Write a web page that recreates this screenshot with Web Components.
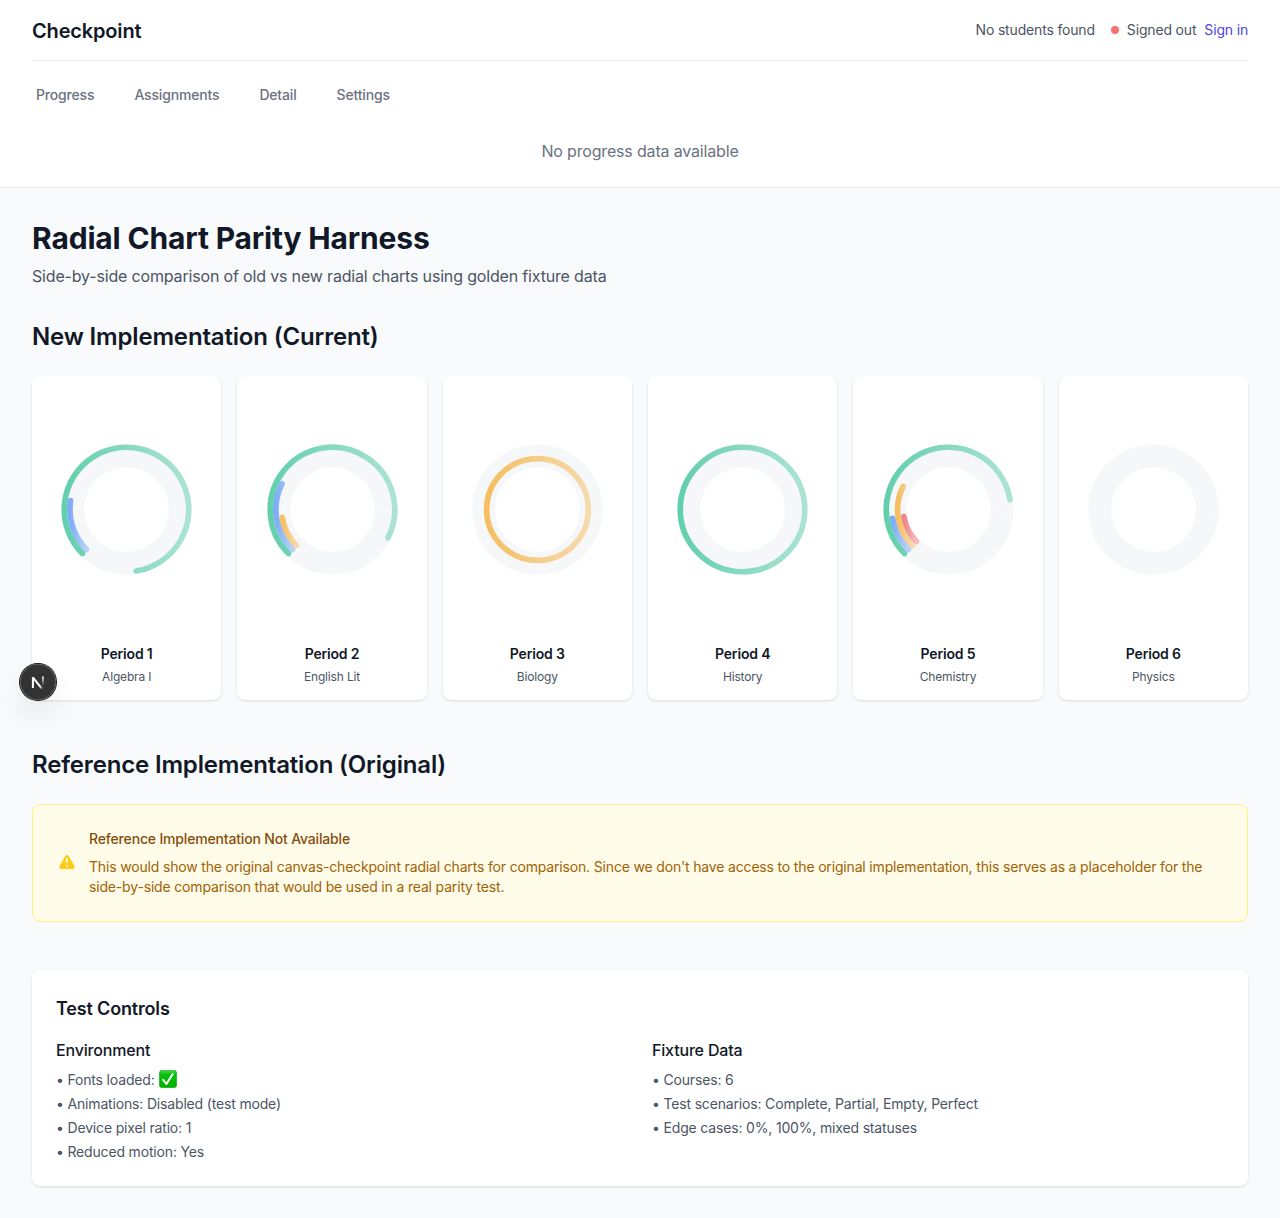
<!DOCTYPE html>
<html lang="en">
<head>
<meta charset="utf-8">
<title>Checkpoint</title>
<style>
  html, body { margin: 0; }
  body { font-family: Inter, "Liberation Sans", sans-serif; font-size: 16px; line-height: 24px; letter-spacing: -0.168px; color: #111827; background: #f9fafb; -webkit-font-smoothing: antialiased; }
</style>
</head>
<body>
<harness-page></harness-page>
<script>
const reset = 'h1,h2,h3,h4,p,ul,li{margin:0;padding:0}:host,div,nav,main{box-sizing:border-box}';
class Base extends HTMLElement {
  connectedCallback() {
    const root = this.attachShadow({ mode: 'open' });
    root.innerHTML = '<style>' + reset + this.css() + '</style>' + this.html();
  }
}

customElements.define('app-header', class extends Base {
  css() { return `
    :host{display:block;background:#fff;border-bottom:1px solid #e5e7eb;padding:0 32px;height:188px}
    .top{display:flex;justify-content:space-between;align-items:center;height:61px;border-bottom:1px solid #e5e7eb}
    h1{font-size:20px;line-height:28px;font-weight:600;padding-top:1px}
    .status{display:flex;align-items:center;font-size:14px;line-height:20px;color:#4b5563}
    .dot{width:8px;height:8px;border-radius:50%;background:#f87171;margin:0 8px 0 16px}
    a{color:#4f46e5;margin-left:8px}
    nav{display:flex;gap:40px;padding:24px 4px 0;font-size:14px;line-height:20px;font-weight:500;color:#6b7280}
    .empty{text-align:center;color:#6b7280;padding-top:34px}
  `; }
  html() { return `
    <div class="top"><h1>Checkpoint</h1>
      <div class="status"><span>No students found</span><i class="dot"></i><span>Signed out</span><a>Sign in</a></div>
    </div>
    <nav><span>Progress</span><span>Assignments</span><span>Detail</span><span>Settings</span></nav>
    <p class="empty">No progress data available</p>`; }
});

let gradientId = 0;
customElements.define('radial-chart', class extends Base {
  css() { return ':host{display:flex;justify-content:center;height:236px;padding-left:.3px}svg{display:block;flex:none;width:157px;height:235px;overflow:visible}'; }
  html() {
    const colors = ['#10b981', '#3b82f6', '#f59e0b', '#ef4444'];
    const radii = [62.25, 56.55, 50.85, 45.15];
    const values = this.getAttribute('values').split(',').map(Number);
    let defs = '', tracks = '', bars = '';
    radii.forEach((r, i) => {
      tracks += `<circle r="${r}" fill="none" stroke="#f5f7f9" stroke-width="5.66"/>`;
      const v = values[i];
      if (!v) return;
      const id = 'g' + gradientId++;
      defs += `<linearGradient id="${id}"><stop stop-color="${colors[i]}" stop-opacity=".64"/><stop offset="1" stop-color="${colors[i]}" stop-opacity=".32"/></linearGradient>`;
      const paint = `fill="none" stroke="url(#${id})" stroke-width="5.7" stroke-linecap="round"`;
      if (v >= 100) { bars += `<circle r="${r}" ${paint}/>`; return; }
      const pt = deg => { const a = deg * Math.PI / 180; return (r * Math.cos(a)).toFixed(3) + ' ' + (-r * Math.sin(a)).toFixed(3); };
      const sweep = v * 3.6;
      bars += `<path d="M${pt(225)}A${r} ${r} 0 ${sweep > 180 ? 1 : 0} 1 ${pt(225 - sweep)}" ${paint}/>`;
    });
    return `<svg viewBox="-78.5 -117.5 157 235"><defs>${defs}</defs>${tracks}${bars}</svg>`;
  }
});

customElements.define('course-card', class extends Base {
  css() { return `
    :host{display:block;background:#fff;border-radius:8px;padding:16px;text-align:center;box-shadow:0 1px 3px rgba(0,0,0,.1),0 1px 2px -1px rgba(0,0,0,.1)}
    h3{font-size:14px;line-height:20px;font-weight:600;margin-top:16px}
    p{font-size:12px;line-height:16px;color:#4b5563;margin:5px 0 -1px}`; }
  html() { return `<radial-chart values="${this.getAttribute('values')}"></radial-chart><h3>${this.getAttribute('period')}</h3><p><slot></slot></p>`; }
});

customElements.define('notice-box', class extends Base {
  css() { return `
    :host{display:flex;align-items:center;gap:12px;background:#fefce8;border:1px solid #fef08a;border-radius:8px;padding:24px}
    svg{width:20px;height:20px;flex:none;color:#facc15}
    .t{font-size:14px;line-height:20px;color:#a16207}
    h3{font-size:14px;line-height:20px;font-weight:500;color:#854d0e;margin-bottom:8px}`; }
  html() { return `<svg viewBox="0 0 20 20" fill="currentColor"><path fill-rule="evenodd" d="M8.257 3.099c.765-1.36 2.722-1.36 3.486 0l5.58 9.92c.75 1.334-.213 2.98-1.742 2.98H4.42c-1.53 0-2.493-1.646-1.743-2.98l5.58-9.92zM11 13a1 1 0 11-2 0 1 1 0 012 0zm-1-8a1 1 0 00-1 1v3a1 1 0 002 0V6a1 1 0 00-1-1z" clip-rule="evenodd"/></svg><div class="t"><h3>${this.getAttribute('heading')}</h3><slot></slot></div>`; }
});

customElements.define('check-mark', class extends Base {
  css() { return ':host{display:inline-block;width:18px;height:18px;vertical-align:-3px;margin:-1px 0 0 1px}svg{display:block}'; }
  html() { return `<svg width="18" height="18" viewBox="0 0 18 18"><defs><linearGradient id="c" x2="0" y2="1"><stop stop-color="#43d84b"/><stop offset=".25" stop-color="#08bd0c"/><stop offset="1" stop-color="#00b400"/></linearGradient></defs><rect x=".3" y=".3" width="17.4" height="17.4" rx="3" fill="url(#c)" stroke="#14a51b" stroke-width=".6"/><path d="M4.2 9.8 7.4 14 13.6 4.2" fill="none" stroke="#fff" stroke-width="2" stroke-linecap="round" stroke-linejoin="round"/></svg>`; }
});

customElements.define('test-controls', class extends Base {
  css() { return `
    :host{display:block;background:#fff;border-radius:8px;padding:24px;box-shadow:0 1px 3px rgba(0,0,0,.1),0 1px 2px -1px rgba(0,0,0,.1)}
    h3{font-size:18px;line-height:28px;font-weight:600;padding-top:1px;margin-bottom:15px}
    .cols{display:grid;grid-template-columns:1fr 1fr;gap:24px}
    h4{font-size:16px;line-height:24px;font-weight:500;margin-bottom:8px}
    ul{list-style:none;display:flex;flex-direction:column;gap:4px;font-size:14px;line-height:20px;color:#4b5563}
    li{height:20px}`; }
  html() { return `<h3>Test Controls</h3><div class="cols">
    <div><h4>Environment</h4><ul><li>• Fonts loaded: <check-mark></check-mark></li><li>• Animations: Disabled (test mode)</li><li>• Device pixel ratio: 1</li><li>• Reduced motion: Yes</li></ul></div>
    <div><h4>Fixture Data</h4><ul><li>• Courses: 6</li><li>• Test scenarios: Complete, Partial, Empty, Perfect</li><li>• Edge cases: 0%, 100%, mixed statuses</li></ul></div></div>`; }
});

customElements.define('dev-badge', class extends Base {
  css() { return `
    :host{display:block;position:absolute;left:20px;top:664px;width:36px;height:36px;border-radius:50%;background:rgba(0,0,0,.8);
      box-shadow:0 0 0 1px #171717,inset 0 0 0 1px rgba(255,255,255,.14),0 16px 32px -8px rgba(0,0,0,.24)}
    svg{display:block}`; }
  html() { return `<svg width="36" height="36" viewBox="0 0 36 36" fill="none"><defs><linearGradient id="a" gradientUnits="userSpaceOnUse" x1="18" y1="17" x2="23.5" y2="24.5"><stop stop-color="#fff"/><stop offset=".6" stop-color="#fff"/><stop offset="1" stop-color="#fff" stop-opacity="0"/></linearGradient><linearGradient id="b" gradientUnits="userSpaceOnUse" x1="0" y1="12" x2="0" y2="22"><stop stop-color="#fff"/><stop offset="1" stop-color="#fff" stop-opacity="0"/></linearGradient></defs><path d="M12.9 24V13.4L22.2 25.2" stroke="url(#a)" stroke-width="2" stroke-linejoin="bevel"/><path d="M22.9 12.4V21.5" stroke="url(#b)" stroke-width="1.8"/></svg>`; }
});

customElements.define('harness-page', class extends Base {
  css() { return `
    :host{display:block}
    main{padding:32px}
    h1{font-size:30px;line-height:36px;font-weight:700;margin-bottom:8px}
    .sub{color:#4b5563;margin-bottom:32px}
    h2{font-size:24px;line-height:32px;font-weight:600;padding-top:1px;margin-bottom:23px}
    section{margin-bottom:48px}
    .grid{display:grid;grid-template-columns:repeat(6,minmax(0,1fr));gap:16px}`; }
  html() { return `<app-header></app-header><main>
    <h1>Radial Chart Parity Harness</h1>
    <p class="sub">Side-by-side comparison of old vs new radial charts using golden fixture data</p>
    <section><h2>New Implementation (Current)</h2><div class="grid">
      <course-card period="Period 1" values="85,15,0,0">Algebra I</course-card>
      <course-card period="Period 2" values="70,20,10,0">English Lit</course-card>
      <course-card period="Period 3" values="0,0,100,0">Biology</course-card>
      <course-card period="Period 4" values="100,0,0,0">History</course-card>
      <course-card period="Period 5" values="60,10,20,10">Chemistry</course-card>
      <course-card period="Period 6" values="0,0,0,0">Physics</course-card>
    </div></section>
    <section><h2>Reference Implementation (Original)</h2>
      <notice-box heading="Reference Implementation Not Available">This would show the original canvas-checkpoint radial charts for comparison. Since we don't have access to the original implementation, this serves as a placeholder for the side-by-side comparison that would be used in a real parity test.</notice-box></section>
    <test-controls></test-controls>
  </main><dev-badge></dev-badge>`; }
});
</script>
</body>
</html>
